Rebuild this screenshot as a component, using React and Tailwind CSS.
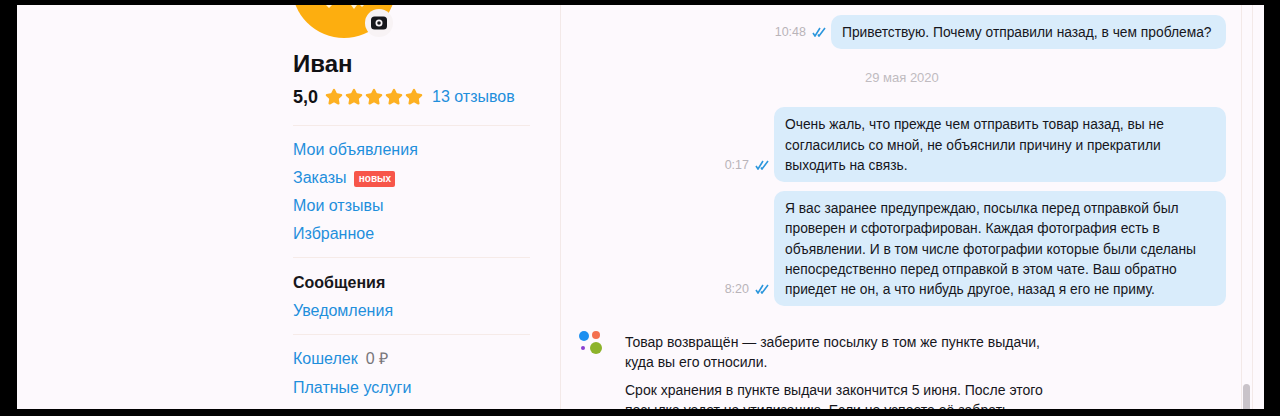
import { Star } from 'lucide-react';

const Ticks = () => (
    <svg width="14" height="10" viewBox="0 0 14 10" fill="none" stroke="#2b96dc" strokeWidth="1.6" className="shrink-0">
        <path d="M1 6l2 3 5-8" />
        <path d="M6 7.5l1 1.5 6-8" />
    </svg>
);

const Divider = () => <div className="h-px bg-[#f6ebe8]" />;

const NavLink = ({ children }) => (
    <div className="h-7 flex items-center text-[16px] text-[#1f8fdc]">{children}</div>
);

const Bubble = ({ time, width, lines }) => (
    <div className="flex items-end">
        <div className="flex items-center gap-[6px] pb-[10px] mr-[5px] text-[12.5px] leading-[14px] text-[#b9b4b9]">
            <span>{time}</span>
            <Ticks />
        </div>
        <div className={`bg-[#d9ecfb] rounded-[10px] pl-[11px] pt-[8px] pb-[6px] text-[13.8px] leading-[20.25px] text-[#16161c] whitespace-nowrap ${width}`}>
            {lines.map((line) => (
                <div key={line}>{line}</div>
            ))}
        </div>
    </div>
);

const App = () => {
    return (
        <div className="h-[416px] bg-black pt-[5px] pl-[17px] overflow-hidden font-['Liberation_Sans',Arial,sans-serif]">
            <div className="w-[1247px] h-[404px] bg-[#fdf9fd] flex overflow-hidden">
                {/* Profile sidebar */}
                <div className="w-[544px] shrink-0 border-r border-[#f3e9e8] pl-[276px] pr-[30px]">
                    <div className="relative w-[104px] h-[104px] -mt-[71px] -ml-[1px] rounded-full bg-[#fdae0f]">
                        <svg width="40" height="5" viewBox="0 0 40 5" className="absolute left-[33px] top-[71px]">
                            <path d="M1 0l3 3 3-3zM26 0l3 4 3-4zM35 0l2 2 2-2z" fill="#fff3d8" />
                        </svg>
                        <div className="absolute left-[73px] top-[75px] w-[28px] h-[28px] rounded-full bg-[#f8f3f5] flex items-center justify-center">
                            <svg width="18" height="14" viewBox="0 0 18 14">
                                <rect x="1" y="0.5" width="16" height="13" rx="3.5" fill="#17171b" />
                                <circle cx="9" cy="7" r="3.5" fill="#f8f3f5" />
                                <circle cx="9" cy="7" r="1.8" fill="#17171b" />
                            </svg>
                        </div>
                    </div>
                    <div className="mt-[11px] text-[24px] leading-[30px] font-bold text-[#111114]">Иван</div>
                    <div className="mt-[6px] h-6 flex items-center">
                        <span className="text-[18px] font-bold text-[#111114] mr-[7px]">5,0</span>
                        <div className="flex gap-[2px] mr-[9px]">
                            {[1, 2, 3, 4, 5].map((n) => (
                                <Star key={n} size={18} fill="#fdb022" stroke="#fdb022" />
                            ))}
                        </div>
                        <span className="text-[16px] text-[#1f8fdc]">13 отзывов</span>
                    </div>
                    <div className="mt-[16px]"><Divider /></div>
                    <div className="mt-[10px]">
                        <NavLink>Мои объявления</NavLink>
                        <NavLink>
                            Заказы
                            <span className="ml-[8px] mt-px w-[41px] h-4 bg-[#f7564a] rounded-[2px] text-white text-[10px] font-bold flex items-center justify-center">новых</span>
                        </NavLink>
                        <NavLink>Мои отзывы</NavLink>
                        <NavLink>Избранное</NavLink>
                    </div>
                    <div className="mt-[9px]"><Divider /></div>
                    <div className="mt-[11px] h-7 flex items-center text-[16px] font-bold text-[#17171b]">Сообщения</div>
                    <NavLink>Уведомления</NavLink>
                    <div className="mt-[9px]"><Divider /></div>
                    <div className="mt-[10px]">
                        <NavLink>
                            Кошелек
                            <span className="ml-[8px] text-[#77757a]">0 ₽</span>
                        </NavLink>
                        <div className="mt-px">
                            <NavLink>Платные услуги</NavLink>
                        </div>
                    </div>
                </div>

                {/* Chat column */}
                <div className="w-[680px] shrink-0 pt-[10px] pl-[18px] pr-[15px]">
                    <div className="flex flex-col items-end">
                        <Bubble
                            time="10:48"
                            width="w-[395px]"
                            lines={['Приветствую. Почему отправили назад, в чем проблема?']}
                        />
                        <div className="self-start ml-[286px] mt-[22px] text-[13px] leading-[14px] text-[#c0bbc0]">29 мая 2020</div>
                        <div className="mt-[22px]">
                            <Bubble
                                time="0:17"
                                width="w-[452px]"
                                lines={[
                                    'Очень жаль, что прежде чем отправить товар назад, вы не',
                                    'согласились со мной, не объяснили причину и прекратили',
                                    'выходить на связь.',
                                ]}
                            />
                        </div>
                        <div className="mt-[9px]">
                            <Bubble
                                time="8:20"
                                width="w-[452px]"
                                lines={[
                                    'Я вас заранее предупреждаю, посылка перед отправкой был',
                                    'проверен и сфотографирован. Каждая фотография есть в',
                                    'объявлении. И в том числе фотографии которые были сделаны',
                                    'непосредственно перед отправкой в этом чате. Ваш обратно',
                                    'приедет не он, а что нибудь другое, назад я его не приму.',
                                ]}
                            />
                        </div>
                    </div>
                    <div className="flex mt-[26px]">
                        <svg width="28" height="28" viewBox="0 0 28 28" className="shrink-0 -mt-[2px]">
                            <circle cx="5" cy="6" r="5" fill="#1e90f0" />
                            <circle cx="17" cy="5" r="4" fill="#f4704f" />
                            <circle cx="4" cy="18" r="2" fill="#8a3fd0" />
                            <circle cx="17" cy="18" r="6" fill="#8db32b" />
                        </svg>
                        <div className="ml-[18px] text-[14px] leading-[20px] text-[#16161c] whitespace-nowrap">
                            <div>Товар возвращён — заберите посылку в том же пункте выдачи,</div>
                            <div>куда вы его относили.</div>
                            <div className="mt-[8px]">Срок хранения в пункте выдачи закончится 5 июня. После этого</div>
                            <div>посылка уедет на утилизацию. Если не успеете её забрать</div>
                        </div>
                    </div>
                </div>

                {/* Scrollbar */}
                <div className="w-[12px] shrink-0 border-x border-[#f3e9e8] flex flex-col justify-end pl-px pr-[2px]">
                    <div className="h-[25px] bg-[#c9c3c9] rounded-t-full" />
                </div>
            </div>
        </div>
    );
};

export default App;
